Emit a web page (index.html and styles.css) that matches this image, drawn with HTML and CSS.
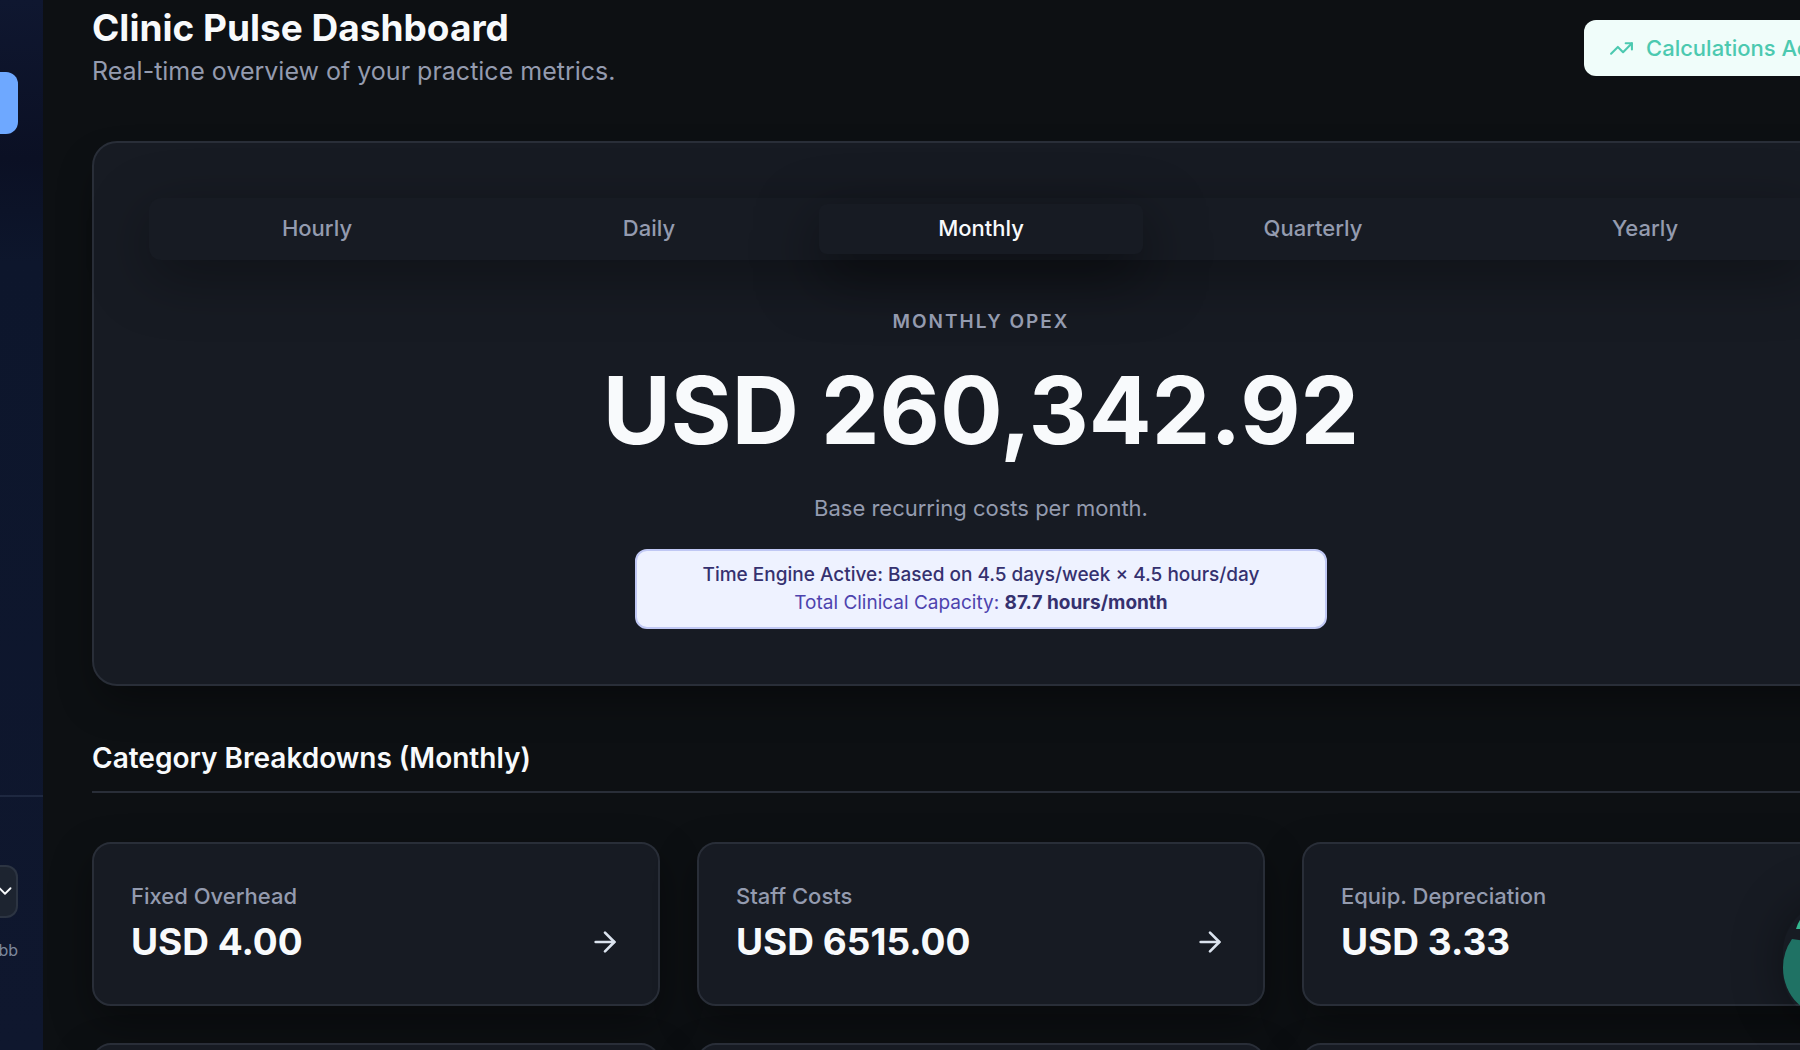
FILE: index.html
```html
<!DOCTYPE html>
<html lang="en">
<head>
    <meta charset="UTF-8">
    <meta name="viewport" content="width=device-width, initial-scale=1.0">
    <title>Clinic Pulse Dashboard</title>
    <link rel="stylesheet" href="styles.css">
</head>
<body>
    <div class="app">
        <aside class="sidebar">
            <nav class="sidebar-nav">
                <a class="nav-item active" href="#" aria-label="Dashboard"></a>
            </nav>
            <div class="sidebar-footer">
                <div class="select-wrap">
                    <select class="sidebar-select" aria-label="Currency">
                        <option></option>
                    </select>
                    <svg class="chevron" viewBox="0 0 24 24"><path d="m6 9 6 6 6-6"/></svg>
                </div>
                <span class="user-name">bb</span>
            </div>
        </aside>

        <main class="main">
            <header class="page-header">
                <div>
                    <h1>Clinic Pulse Dashboard</h1>
                    <p class="subtitle">Real-time overview of your practice metrics.</p>
                </div>
                <div class="status">
                    <svg class="status-icon" viewBox="0 0 24 24"><path d="M22 7 13.5 15.5 8.5 10.5 2 17"/><path d="M16 7h6v6"/></svg>
                    <span>Calculations Active</span>
                </div>
            </header>

            <section class="hero">
                <div class="tabs">
                    <button class="tab">Hourly</button>
                    <button class="tab">Daily</button>
                    <button class="tab active">Monthly</button>
                    <button class="tab">Quarterly</button>
                    <button class="tab">Yearly</button>
                </div>
                <h2 class="hero-label">Monthly Opex</h2>
                <div class="hero-value">USD 260,342.92</div>
                <p class="hero-note">Base recurring costs per month.</p>
                <div class="engine">
                    <p class="engine-title">Time Engine Active: Based on 4.5 days/week × 4.5 hours/day</p>
                    <p>Total Clinical Capacity: <strong>87.7 hours/month</strong></p>
                </div>
            </section>

            <h2 class="section-title">Category Breakdowns (Monthly)</h2>
            <div class="cards">
                <a class="card" href="#">
                    <span class="card-label">Fixed Overhead</span>
                    <span class="card-row">
                        <span class="card-value">USD 4.00</span>
                        <svg class="arrow" viewBox="0 0 24 24"><path d="M5 12h14"/><path d="m12 5 7 7-7 7"/></svg>
                    </span>
                </a>
                <a class="card" href="#">
                    <span class="card-label">Staff Costs</span>
                    <span class="card-row">
                        <span class="card-value">USD 6515.00</span>
                        <svg class="arrow" viewBox="0 0 24 24"><path d="M5 12h14"/><path d="m12 5 7 7-7 7"/></svg>
                    </span>
                </a>
                <a class="card" href="#">
                    <span class="card-label">Equip. Depreciation</span>
                    <span class="card-row">
                        <span class="card-value">USD 3.33</span>
                    </span>
                </a>
                <a class="card" href="#" aria-label="Category"></a>
                <a class="card" href="#" aria-label="Category"></a>
                <a class="card" href="#" aria-label="Category"></a>
            </div>
        </main>
    </div>

    <button class="assistant" aria-label="Open assistant">
        <svg viewBox="0 0 100 120">
            <path d="M9 37 A50 50 0 0 0 0 66 A50 50 0 0 0 100 66 V50 Z" fill="#1f7264"/>
            <path d="M13 27 Q16 16 26 8 V27 Z" fill="#34b78f"/>
        </svg>
    </button>
</body>
</html>
```
FILE: styles.css
```css
* {
    box-sizing: border-box;
    margin: 0;
    padding: 0;
}
body {
    font-family: Inter, sans-serif;
    background: #0d1013;
    color: #f8fafc;
    height: 100vh;
    overflow: hidden;
}
a {
    color: inherit;
    text-decoration: none;
}
svg {
    fill: none;
    stroke: currentColor;
    stroke-width: 2;
    stroke-linecap: round;
    stroke-linejoin: round;
}
.app {
    display: flex;
    height: 100vh;
    overflow: hidden;
}

/* Sidebar */
.sidebar {
    flex: 0 0 43px;
    display: flex;
    flex-direction: column;
    justify-content: space-between;
    overflow: hidden;
    background: linear-gradient(180deg, #0f1730 0%, #0b1024 15%, #0d162c 25%, #0f172e 100%);
}
.sidebar-nav {
    padding: 72px 25px 0 0;
}
.nav-item {
    display: block;
    height: 62px;
    border-radius: 0 12px 12px 0;
    background: #6ea8ff;
}
.sidebar-footer {
    height: 255px;
    padding: 68px 25px 0 0;
    border-top: 2px solid #1e2840;
    display: flex;
    flex-direction: column;
    align-items: flex-end;
    gap: 20px;
}
.select-wrap {
    position: relative;
    width: 100%;
}
.sidebar-select {
    display: block;
    appearance: none;
    width: 100%;
    height: 53px;
    border: 2px solid #2c3442;
    border-left: none;
    border-radius: 0 12px 12px 0;
    background: #1d2430;
    color: #f8fafc;
}
.chevron {
    position: absolute;
    right: 2px;
    top: 15px;
    width: 22px;
    height: 22px;
    pointer-events: none;
}
.user-name {
    font-size: 16px;
    line-height: 24px;
    color: #7d879b;
}

/* Content runs past the right edge of the window */
.main {
    flex: 1;
    min-width: 0;
    margin-right: -120px;
    padding: 8px 50px 0 49px;
}
.page-header {
    display: flex;
    justify-content: space-between;
    align-items: center;
    height: 80px;
    margin-bottom: 53px;
}
h1 {
    font-size: 37px;
    line-height: 46px;
    font-weight: 700;
}
.subtitle {
    font-size: 25px;
    line-height: 40px;
    color: #949baf;
}
.status {
    display: flex;
    align-items: center;
    gap: 12px;
    width: 286px;
    height: 56px;
    padding: 0 25px;
    border-radius: 12px;
    background: #f0fdfa;
    color: #4cc9b0;
    font-size: 22px;
    font-weight: 500;
    white-space: nowrap;
}
.status-icon {
    flex: none;
    width: 25px;
    height: 25px;
}

/* Hero */
.hero {
    display: flex;
    flex-direction: column;
    align-items: center;
    padding: 55px;
    border: 2px solid #292e38;
    border-radius: 25px;
    background: #171b23;
    box-shadow: 0 20px 40px -8px rgba(0, 0, 0, 0.4);
    text-align: center;
}
.tabs {
    display: grid;
    grid-template-columns: repeat(5, 1fr);
    gap: 8px;
    align-self: stretch;
    padding: 6px;
    margin-bottom: 48px;
    border-radius: 12px;
    background: #171b23;
    box-shadow: 0 16px 60px rgba(0, 0, 0, 0.35);
}
.tab {
    height: 50px;
    padding-bottom: 2px;
    border: none;
    border-radius: 8px;
    background: transparent;
    color: #949baf;
    font-family: inherit;
    font-size: 22px;
    font-weight: 500;
    cursor: pointer;
}
.tab.active {
    background: #171b23;
    color: #f8fafc;
    box-shadow: 0 20px 60px rgba(0, 0, 0, 0.5);
}
.hero-label {
    font-size: 19px;
    line-height: 28px;
    font-weight: 600;
    letter-spacing: 2px;
    text-transform: uppercase;
    color: #949baf;
    margin-bottom: 28px;
}
.hero-value {
    font-size: 93px;
    line-height: 93px;
    font-weight: 700;
    margin-bottom: 35px;
}
.hero-note {
    font-size: 22px;
    line-height: 32px;
    color: #949baf;
    margin-bottom: 25px;
}
.engine {
    width: 692px;
    padding: 10px;
    border: 2px solid #c0c8f4;
    border-radius: 12px;
    background: #eef2ff;
    color: #4d43ae;
    font-size: 19px;
    line-height: 28px;
}
.engine-title,
.engine strong {
    color: #35316f;
}
.engine-title {
    font-weight: 500;
}

/* Category cards */
.section-title {
    margin: 52px 0 49px;
    padding-bottom: 13px;
    border-bottom: 2px solid #292e38;
    font-size: 28px;
    line-height: 40px;
    font-weight: 600;
}
.cards {
    display: grid;
    grid-template-columns: repeat(3, 1fr);
    gap: 37px;
}
.card {
    min-height: 164px;
    padding: 36px 37px;
    border: 2px solid #292e38;
    border-radius: 19px;
    background: #171b23;
    box-shadow: 0 16px 40px rgba(0, 0, 0, 0.35);
}
.card-label {
    display: block;
    font-size: 22px;
    line-height: 32px;
    font-weight: 500;
    color: #949baf;
    margin-bottom: 8px;
}
.card-row {
    display: flex;
    justify-content: space-between;
    align-items: center;
}
.card-value {
    font-size: 37px;
    line-height: 44px;
    font-weight: 700;
}
.arrow {
    width: 32px;
    height: 32px;
    color: #dbe3ee;
}

/* Floating assistant button */
.assistant {
    position: fixed;
    right: -83px;
    bottom: 28px;
    width: 100px;
    height: 120px;
    border: none;
    border-radius: 50px;
    background: transparent;
    box-shadow: 0 0 50px rgba(0, 0, 0, 0.4);
    cursor: pointer;
}
.assistant svg {
    display: block;
    width: 100px;
    height: 120px;
    stroke: none;
}
```
